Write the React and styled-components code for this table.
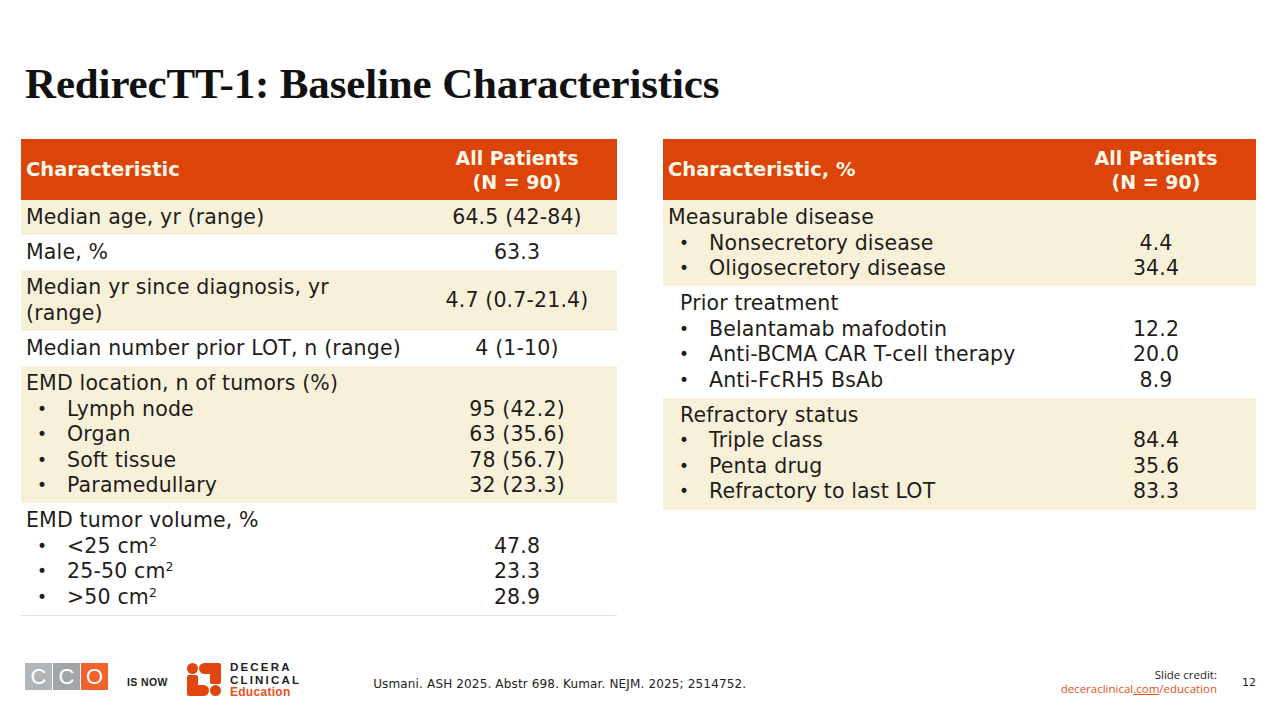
import React from "react";
import styled, { createGlobalStyle } from "styled-components";

const GlobalStyle = createGlobalStyle`
  html, body { margin: 0; padding: 0; background: #fff; }
  * { box-sizing: border-box; }
`;

const ORANGE = "#dd4409";
const CREAM = "#f8f1da";
const INK = "#1f1d1a";
const SANS = `"DejaVu Sans", "Open Sans", sans-serif`;

const Slide = styled.div`
  width: 1280px;
  height: 720px;
  display: flex;
  flex-direction: column;
  background: #fff;
  font-family: ${SANS};
  color: ${INK};
  overflow: hidden;
`;

const Title = styled.h1`
  margin: 0;
  padding: 57px 0 0 25px;
  height: 139px;
  font-family: "Liberation Serif", "Times New Roman", serif;
  font-weight: bold;
  font-size: 43px;
  line-height: 54px;
  letter-spacing: -0.15px;
  color: #111;
`;

const Tables = styled.div`
  display: flex;
  align-items: flex-start;
  gap: 46px;
  padding-left: 21px;
`;

const Table = styled.div`
  width: ${(p) => p.$width}px;
  display: flex;
  flex-direction: column;
  border-bottom: ${(p) => (p.$rule ? "1px solid #e6e1d3" : "none")};
`;

const Head = styled.div`
  display: grid;
  grid-template-columns: 1fr 200px;
  align-items: center;
  height: 61px;
  background: ${ORANGE};
  color: #fff8e8;
  font-weight: 700;
  font-size: 19.5px;
  line-height: 24px;
  padding-left: 5px;
`;

const HeadValue = styled.div`
  text-align: center;
  font-size: 19px;
`;

const Row = styled.div`
  display: grid;
  grid-template-columns: 1fr 200px;
  align-items: center;
  background: ${(p) => (p.$shade ? CREAM : "#fff")};
  padding: 5px 0 4.7px 5px;
  font-size: 20.5px;
  line-height: 25.5px;
  letter-spacing: 0.15px;
`;

const Label = styled.div`
  padding-left: ${(p) => (p.$indent ? 12 : 0)}px;
`;

const Value = styled.div`
  text-align: center;
`;

const Bullet = styled.div`
  display: flex;
  padding-left: 11px;
  &::before {
    content: "•";
    width: 30px;
    flex: none;
    font-size: 17px;
  }
`;

const Sup = styled.sup`
  font-size: 12.5px;
  line-height: 0;
  vertical-align: 7px;
`;

const Footer = styled.div`
  margin-top: auto;
  height: 64px;
  display: flex;
  align-items: flex-start;
  padding: 0 24px 0 25px;
`;

const Cco = styled.div`
  display: flex;
  gap: 1px;
  margin-top: 7px;
`;

const CcoBox = styled.div`
  width: 27px;
  height: 27px;
  background: ${(p) => p.$bg};
  color: #fff;
  display: flex;
  align-items: center;
  justify-content: center;
  font-family: "Liberation Sans", Arial, sans-serif;
  font-size: 22px;
  line-height: 1;
`;

const IsNow = styled.div`
  margin: 20px 0 0 19px;
  font-family: "Liberation Sans", Arial, sans-serif;
  font-weight: bold;
  font-size: 10.5px;
  letter-spacing: 0.4px;
  color: #222;
`;

const Decera = styled.div`
  display: flex;
  align-items: center;
  gap: 9px;
  margin: 5px 0 0 19px;
`;

const DeceraText = styled.div`
  display: flex;
  flex-direction: column;
  font-family: "Liberation Sans", Arial, sans-serif;
  font-weight: bold;
  font-size: 11.5px;
  line-height: 12.5px;
  letter-spacing: 2.2px;
  color: #222;
`;

const DeceraEdu = styled.span`
  color: #e8501c;
  letter-spacing: 0.3px;
  font-size: 12px;
`;

const Citation = styled.div`
  margin: 21px 0 0 72px;
  font-size: 12px;
  letter-spacing: 0.15px;
  color: #222;
`;

const Credit = styled.div`
  margin: 12px 0 0 auto;
  text-align: right;
  font-family: "Open Sans", sans-serif;
  font-size: 11.5px;
  line-height: 14px;
  color: #222;
`;

const CreditLink = styled.div`
  color: #e8501c;
  span { text-decoration: underline; }
`;

const PageNum = styled.div`
  margin: 20px 0 0 25px;
  font-size: 11px;
  color: #222;
`;

const DeceraMark = () => (
  <svg width="34" height="33" viewBox="0 0 34 33">
    <g fill="#e2460f">
      <circle cx="5.5" cy="5.5" r="5.5" />
      <rect x="12" y="0" width="22" height="11" rx="5.5" />
      <rect x="0" y="12" width="11" height="21" rx="2" />
      <rect x="23" y="0" width="11" height="21" rx="2" />
      <rect x="0" y="22" width="22" height="11" rx="5.5" />
      <circle cx="28.5" cy="27.5" r="5.5" />
    </g>
  </svg>
);

const Group = ({ title, items, shade, indent }) => (
  <Row $shade={shade}>
    <Label $indent={indent}>{title}</Label>
    <Value />
    {items.map(([l, v], i) => (
      <React.Fragment key={i}>
        <Bullet>
          <span>{l}</span>
        </Bullet>
        <Value>{v}</Value>
      </React.Fragment>
    ))}
  </Row>
);

const cm = (s) => (
  <>
    {s} cm<Sup>2</Sup>
  </>
);

export default function App() {
  return (
    <Slide>
      <GlobalStyle />
      <Title>RedirecTT-1: Baseline Characteristics</Title>
      <Tables>
        <Table $width={596} $rule>
          <Head>
            <div>Characteristic</div>
            <HeadValue>
              All Patients
              <br />
              (N = 90)
            </HeadValue>
          </Head>
          <Row $shade>
            <Label>Median age, yr (range)</Label>
            <Value>64.5 (42-84)</Value>
          </Row>
          <Row>
            <Label>Male, %</Label>
            <Value>63.3</Value>
          </Row>
          <Row $shade>
            <Label>
              Median yr since diagnosis, yr
              <br />
              (range)
            </Label>
            <Value>4.7 (0.7-21.4)</Value>
          </Row>
          <Row>
            <Label>Median number prior LOT, n (range)</Label>
            <Value>4 (1-10)</Value>
          </Row>
          <Group
            shade
            title="EMD location, n of tumors (%)"
            items={[
              ["Lymph node", "95 (42.2)"],
              ["Organ", "63 (35.6)"],
              ["Soft tissue", "78 (56.7)"],
              ["Paramedullary", "32 (23.3)"],
            ]}
          />
          <Group
            title="EMD tumor volume, %"
            items={[
              [<>{"<"}{cm("25")}</>, "47.8"],
              [cm("25-50"), "23.3"],
              [<>{">"}{cm("50")}</>, "28.9"],
            ]}
          />
        </Table>
        <Table $width={593}>
          <Head>
            <div>Characteristic, %</div>
            <HeadValue>
              All Patients
              <br />
              (N = 90)
            </HeadValue>
          </Head>
          <Group
            shade
            title="Measurable disease"
            items={[
              ["Nonsecretory disease", "4.4"],
              ["Oligosecretory disease", "34.4"],
            ]}
          />
          <Group
            indent
            title="Prior treatment"
            items={[
              ["Belantamab mafodotin", "12.2"],
              ["Anti-BCMA CAR T-cell therapy", "20.0"],
              ["Anti-FcRH5 BsAb", "8.9"],
            ]}
          />
          <Group
            shade
            indent
            title="Refractory status"
            items={[
              ["Triple class", "84.4"],
              ["Penta drug", "35.6"],
              ["Refractory to last LOT", "83.3"],
            ]}
          />
        </Table>
      </Tables>
      <Footer>
        <Cco>
          <CcoBox $bg="#b3b6b8">C</CcoBox>
          <CcoBox $bg="#a2a6a9">C</CcoBox>
          <CcoBox $bg="#f2622a">O</CcoBox>
        </Cco>
        <IsNow>IS NOW</IsNow>
        <Decera>
          <DeceraMark />
          <DeceraText>
            <span>DECERA</span>
            <span>CLINICAL</span>
            <DeceraEdu>Education</DeceraEdu>
          </DeceraText>
        </Decera>
        <Citation>Usmani. ASH 2025. Abstr 698. Kumar. NEJM. 2025; 2514752.</Citation>
        <Credit>
          Slide credit:
          <CreditLink>
            deceraclinical<span>.com</span>/education
          </CreditLink>
        </Credit>
        <PageNum>12</PageNum>
      </Footer>
    </Slide>
  );
}
